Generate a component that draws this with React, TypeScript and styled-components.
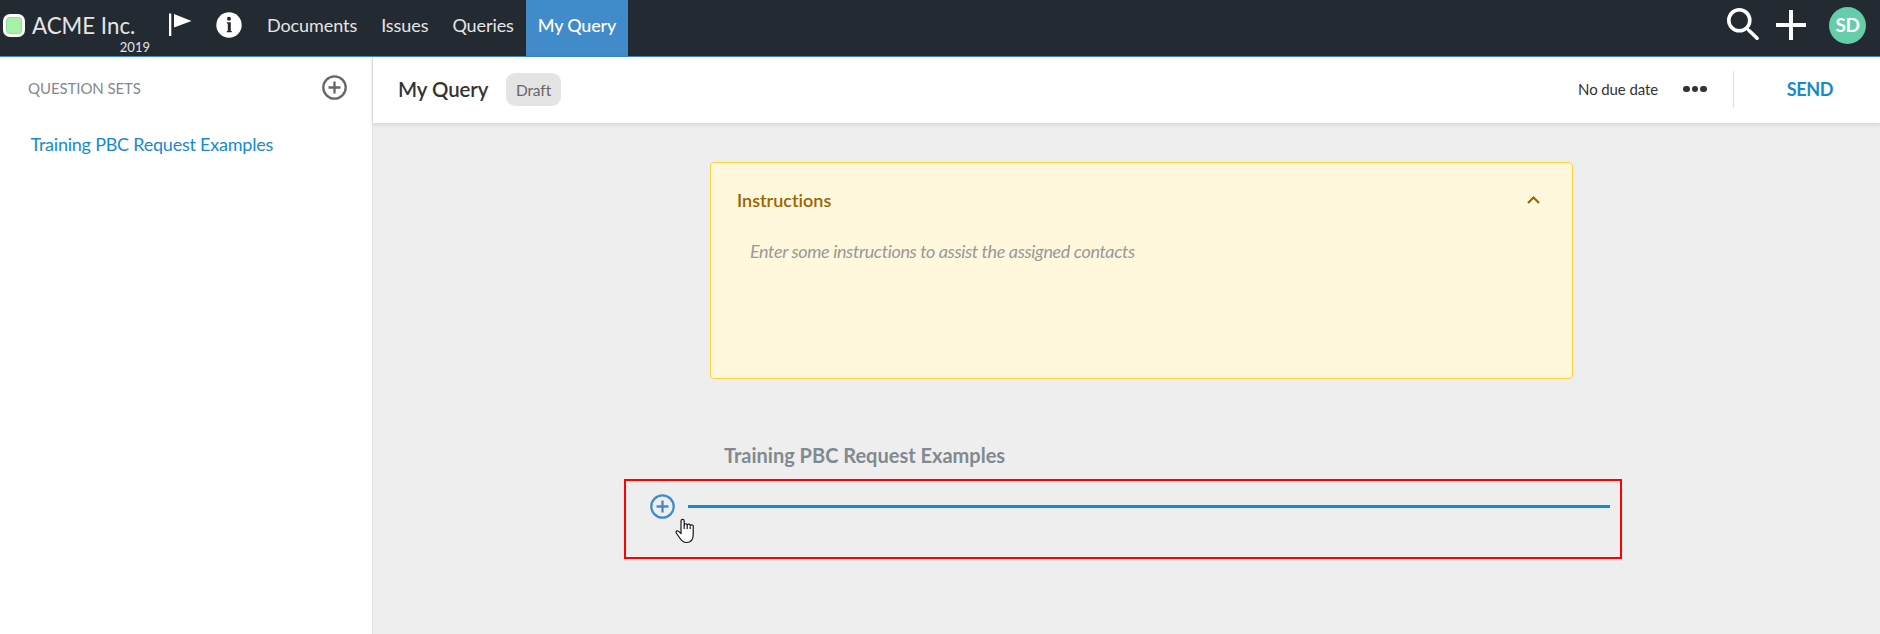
import React from 'react';
import styled, { createGlobalStyle } from 'styled-components';

const GlobalStyle = createGlobalStyle`
  *, *::before, *::after { box-sizing: border-box; }
  body {
    margin: 0;
    font-family: Lato, sans-serif;
    font-variant-ligatures: none;
    background: #eee;
  }
  svg { display: block; flex: none; }
`;

const Page = styled.div`
  display: flex;
  flex-direction: column;
  height: 634px;
  overflow: hidden;
`;

const TopBar = styled.nav`
  flex: none;
  display: flex;
  height: 57px;
  background: #232a32;
  border-bottom: 1px solid #428bca;
  color: #e5e5e5;
`;

const Brand = styled.div`
  display: flex;
  width: 155px;
  padding-left: 3px;
`;

const EntityMark = styled.span`
  flex: none;
  width: 22px;
  height: 23px;
  margin: 14px 7px 0 0;
  border: 3px solid #fff;
  border-radius: 7px;
  background: #a6f0a8;
  box-shadow: inset 0 0 0 1px #98dc9b;
`;

const BrandText = styled.div`
  display: flex;
  flex-direction: column;
  width: 118px;
  padding-top: 12px;
`;

const BrandName = styled.span`
  font-size: 22.3px;
  line-height: 27px;
  white-space: nowrap;
`;

const BrandYear = styled.span`
  align-self: flex-end;
  font-size: 13px;
  line-height: 16px;
`;

const QuickIcons = styled.div`
  display: flex;
  width: 100px;
  padding-top: 12px;
  padding-left: 13px;
  gap: 23px;
`;

const NavItem = styled.a<{ $active?: boolean }>`
  padding: 0 12px;
  font-size: 18px;
  line-height: 51px;
  letter-spacing: ${p => (p.$active ? '-0.2px' : '-0.08px')};
  white-space: nowrap;
  color: ${p => (p.$active ? '#fff' : 'inherit')};
  background: ${p => (p.$active ? '#428bca' : 'transparent')};
  font-weight: ${p => (p.$active ? 500 : 400)};
`;

const Tools = styled.div`
  display: flex;
  margin-left: auto;
  padding: 7px 14px 0 0;
`;

const Avatar = styled.span`
  width: 37px;
  height: 37px;
  margin-left: 23px;
  border-radius: 50%;
  background: #66cdaa;
  color: #fff;
  font-size: 19px;
  font-weight: 700;
  line-height: 36px;
  letter-spacing: -0.4px;
  text-align: center;
`;

const Body = styled.div`
  flex: 1;
  display: flex;
  min-height: 0;
`;

const Sidebar = styled.aside`
  flex: none;
  width: 373px;
  border-right: 1px solid #e4e4e4;
  background: #fff;
`;

const SidebarHead = styled.div`
  display: flex;
  align-items: center;
  justify-content: space-between;
  height: 61px;
  padding: 0 25px 0 28px;
`;

const SidebarTitle = styled.span`
  font-size: 15px;
  line-height: 20px;
  letter-spacing: -0.08px;
  color: #818a91;
`;

const SetLink = styled.a`
  display: block;
  padding: 14px 30.5px;
  font-size: 18px;
  line-height: 24px;
  letter-spacing: -0.23px;
  white-space: nowrap;
  color: #178acb;
`;

const Main = styled.main`
  flex: 1;
  display: flex;
  flex-direction: column;
  align-items: flex-start;
  min-width: 0;
`;

const QueryHeader = styled.header`
  align-self: stretch;
  flex: none;
  display: flex;
  align-items: center;
  height: 66px;
  padding: 0 47px 2px 25px;
  background: #fff;
  box-shadow: 0 1px 5px rgba(0, 0, 0, 0.14);
  color: #333;
`;

const QueryTitle = styled.h1`
  width: 90px;
  margin: 0;
  font-size: 20.4px;
  font-weight: 600;
  line-height: 26px;
  letter-spacing: -0.05px;
  white-space: nowrap;
`;

const StatusBadge = styled.span`
  width: 55px;
  height: 33px;
  margin-left: 18px;
  border-radius: 9px;
  background: #e4e4e4;
  color: #666;
  font-size: 15.5px;
  line-height: 34px;
  letter-spacing: -0.1px;
  text-align: center;
`;

const DueDate = styled.span`
  margin-left: auto;
  font-size: 15px;
  letter-spacing: -0.1px;
  line-height: 20px;
`;

const Dots = styled.span`
  display: flex;
  gap: 2px;
  margin: 0 26px 0 25px;
`;

const Dot = styled.i`
  width: 6.6px;
  height: 6.6px;
  border-radius: 50%;
  background: #333;
`;

const SendButton = styled.button`
  height: 37px;
  margin: 0;
  padding: 0 0 0 53px;
  border: 0;
  border-left: 1px solid #ddd;
  background: none;
  color: #178acb;
  font: 700 18px Lato, sans-serif;
  letter-spacing: -0.4px;
`;

const InstructionsCard = styled.section`
  flex: none;
  width: 863px;
  height: 217px;
  margin: 39px 0 0 337px;
  padding: 23px 32px 0 26px;
  border: 1px solid #fdd23e;
  border-radius: 4px;
  background: #fff8dc;
`;

const CardHead = styled.div`
  display: flex;
  align-items: center;
  justify-content: space-between;
`;

const CardTitle = styled.h2`
  margin: 0;
  font-size: 18px;
  font-weight: 600;
  line-height: 28px;
  color: #9a6400;
`;

const Placeholder = styled.p`
  margin: 25px 0 0 13px;
  font-size: 18px;
  font-style: italic;
  line-height: 24px;
  letter-spacing: -0.37px;
  color: #999;
`;

const QuestionSet = styled.section`
  width: 998px;
  margin: 61px 0 0 251px;
`;

const SetTitle = styled.h2`
  margin: 0 0 9px 100px;
  font-size: 20px;
  font-weight: 700;
  line-height: 30px;
  color: #818a91;
`;

const InsertArea = styled.div`
  position: relative;
  display: flex;
  align-items: flex-start;
  width: 998px;
  height: 80px;
  padding: 13px 10px 0 24px;
  border: 2px solid #f00;
`;

const InsertLine = styled.span`
  flex: 1;
  height: 3px;
  margin: 11px 0 0 13px;
  background: #178acb;
`;

const Pointer = styled.svg`
  position: absolute;
  left: 49px;
  top: 37px;
`;

const PlusCircle = ({ color }: { color: string }) => (
  <svg width="25" height="25" viewBox="0 0 25 25" fill="none" stroke={color} strokeWidth="2.3">
    <circle cx="12.5" cy="12.5" r="11.2" />
    <path d="M12.5 6.500v12M6.500 12.500h12" />
  </svg>
);

export default function App() {
  return (
    <Page>
      <GlobalStyle />
      <TopBar>
        <Brand>
          <EntityMark />
          <BrandText>
            <BrandName>ACME Inc.</BrandName>
            <BrandYear>2019</BrandYear>
          </BrandText>
        </Brand>
        <QuickIcons>
          <svg width="25" height="26" viewBox="0 0 25 26" fill="#fff">
            <path d="M1 1.500h2.300V24H1zM6 2l17.500 7L6 15.500z" />
          </svg>
          <svg width="26" height="26" viewBox="0 0 26 26">
            <circle cx="13" cy="13" r="12.700" fill="#fff" />
            <circle cx="13" cy="6.800" r="2" fill="#232a32" />
            <path d="M10.800 10.300h4v8.700h1v1.300h-5v-1.300h1v-7.400h-1z" fill="#232a32" />
          </svg>
        </QuickIcons>
        <NavItem>Documents</NavItem>
        <NavItem>Issues</NavItem>
        <NavItem>Queries</NavItem>
        <NavItem $active>My Query</NavItem>
        <Tools>
          <svg width="80" height="36" viewBox="0 0 80 36" fill="none" stroke="#fff" strokeWidth="4">
            <circle cx="13.300" cy="13.300" r="10.500" strokeWidth="3.600" />
            <path d="M20.800 21.500l3 3" strokeWidth="2.500" />
            <path d="M23.300 23.800l7.800 7.400" strokeLinecap="round" strokeWidth="3.600" />
            <path d="M65 3v30M50 18h30" />
          </svg>
          <Avatar>SD</Avatar>
        </Tools>
      </TopBar>
      <Body>
        <Sidebar>
          <SidebarHead>
            <SidebarTitle>QUESTION SETS</SidebarTitle>
            <PlusCircle color="#666" />
          </SidebarHead>
          <SetLink>Training PBC Request Examples</SetLink>
        </Sidebar>
        <Main>
          <QueryHeader>
            <QueryTitle>My Query</QueryTitle>
            <StatusBadge>Draft</StatusBadge>
            <DueDate>No due date</DueDate>
            <Dots>
              <Dot />
              <Dot />
              <Dot />
            </Dots>
            <SendButton>SEND</SendButton>
          </QueryHeader>
          <InstructionsCard>
            <CardHead>
              <CardTitle>Instructions</CardTitle>
              <svg width="13" height="8" viewBox="0 0 13 8" fill="none" stroke="#9a6400" strokeWidth="2">
                <path d="M1 7l5.500-5.500L12 7" />
              </svg>
            </CardHead>
            <Placeholder>Enter some instructions to assist the assigned contacts</Placeholder>
          </InstructionsCard>
          <QuestionSet>
            <SetTitle>Training PBC Request Examples</SetTitle>
            <InsertArea>
              <PlusCircle color="#428bca" />
              <InsertLine />
              <Pointer width="20" height="26" viewBox="0 0 20 26" fill="#fff" stroke="#15151f" strokeWidth="1.200" strokeLinejoin="round">
                <path d="M6 15.500V3a1.600 1.600 0 0 1 3.200 0v4.200a1.500 1.500 0 0 1 3 .1 1.500 1.500 0 0 1 3 .6 1.500 1.500 0 0 1 3 1.100v7.500c0 5-2.600 8-6.800 8-3.600 0-5-1.800-7-5L1.300 15c-.8-1.700.8-2.800 2.300-1.600z" />
                <path d="M9.200 7v4M12.200 7.500V11M15.200 8.500V11" />
              </Pointer>
            </InsertArea>
          </QuestionSet>
        </Main>
      </Body>
    </Page>
  );
}
